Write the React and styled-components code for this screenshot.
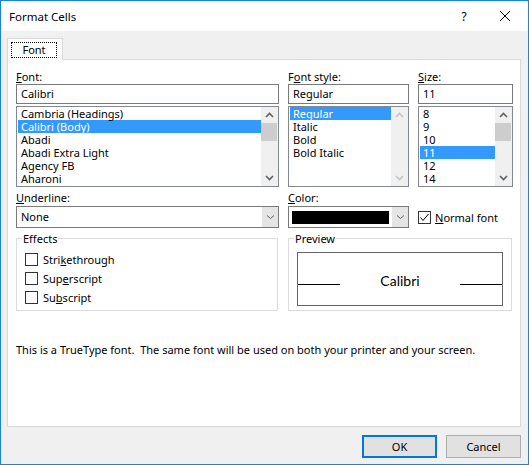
import React from "react";
import styled, { createGlobalStyle } from "styled-components";

const GlobalStyle = createGlobalStyle`
  html, body {
    margin: 0;
    padding: 0;
    background: #ffffff;
  }
  body {
    font-family: "Noto Sans", "Open Sans", sans-serif;
    font-size: 11px;
    color: #000000;
  }
  * {
    box-sizing: border-box;
  }
`;

const Window = styled.div`
  width: 529px;
  height: 465px;
  display: flex;
  flex-direction: column;
  border: 1px solid #1883d7;
  background: #f0f0f0;
`;

const TitleBar = styled.div`
  flex: none;
  height: 30px;
  display: flex;
  align-items: center;
  padding-left: 8px;
  background: #ffffff;
`;

const Title = styled.span`
  font-size: 11.5px;
  line-height: 15px;
`;

const TitleButton = styled.div`
  width: ${(props) => props.$width}px;
  height: 30px;
  display: flex;
  align-items: center;
  justify-content: center;
  font-size: 12px;
  &:first-of-type {
    margin-left: auto;
  }
`;

const Body = styled.div`
  flex: 1;
  display: flex;
  flex-direction: column;
  padding: 7px 7px 6px 6px;
`;

const TabStrip = styled.div`
  display: flex;
  height: 21px;
`;

const Tab = styled.div`
  position: relative;
  z-index: 1;
  width: 56px;
  height: 22px;
  padding: 3px 0 0 3px;
  background: #ffffff;
  border: 1px solid #d9d9d9;
  border-bottom: none;
`;

const TabFocus = styled.div`
  width: 46px;
  height: 16px;
  border: 1px dotted #000000;
  line-height: 14px;
  text-align: center;
`;

const Panel = styled.div`
  flex: 1;
  display: flex;
  flex-direction: column;
  padding: 9px 7px 0 8px;
  background: #ffffff;
  border: 1px solid #d9d9d9;
`;

const FieldGrid = styled.div`
  display: grid;
  grid-template-columns: 263px 121px 95px;
  column-gap: 9px;
  row-gap: 3px;
`;

const Field = styled.div`
  display: flex;
  flex-direction: column;
  gap: ${(props) => props.$gap || 0}px;
`;

const Label = styled.div`
  height: 15px;
  line-height: 15px;
  white-space: pre;
`;

const Key = styled.span`
  text-decoration: underline;
  text-underline-offset: 1px;
`;

const TextBox = styled.div`
  height: 20px;
  padding-left: 4px;
  line-height: 18px;
  border: 1px solid #7a7a7a;
  background: #ffffff;
`;

const ListBox = styled.div`
  height: 81px;
  margin-top: 2px;
  display: flex;
  border: 1px solid #828790;
  background: #ffffff;
`;

const ListItems = styled.div`
  flex: 1;
  padding-left: 1px;
  overflow: hidden;
`;

const ListItem = styled.div`
  height: 13px;
  padding-left: 3px;
  line-height: 13px;
  white-space: nowrap;
  background: ${(props) => (props.$selected ? "#3399ff" : "transparent")};
  color: ${(props) => (props.$selected ? "#ffffff" : "#000000")};
`;

const ScrollBar = styled.div`
  width: 17px;
  display: flex;
  flex-direction: column;
  background: #f0f0f0;
`;

const ArrowCell = styled.div`
  height: 16px;
  display: flex;
  align-items: center;
  justify-content: center;
`;

const Track = styled.div`
  flex: 1;
`;

const Thumb = styled.div`
  height: 18px;
  margin: ${(props) => props.$top}px 1px 0 0;
  background: #cdcdcd;
`;

const Combo = styled.div`
  height: 22px;
  display: flex;
  align-items: center;
  border: 1px solid #7a7a7a;
  background: #ffffff;
`;

const ComboText = styled.div`
  flex: 1;
  padding-left: 4px;
  line-height: 18px;
`;

const Swatch = styled.div`
  flex: 1;
  height: 13px;
  margin: 0 3px;
  background: #000000;
`;

const ComboButton = styled.div`
  width: 16px;
  align-self: stretch;
  display: flex;
  align-items: center;
  justify-content: center;
  background: #e5e5e5;
`;

const CheckRow = styled.label`
  height: ${(props) => props.$height || 13}px;
  display: flex;
  align-items: center;
  gap: ${(props) => props.$gap || 5}px;
  line-height: 13px;
  align-self: ${(props) => props.$align || "auto"};
`;

const Box = styled.span`
  width: 13px;
  height: 13px;
  flex: none;
  display: flex;
  align-items: center;
  justify-content: center;
  border: 1px solid #333333;
  background: #ffffff;
`;

const Group = styled.fieldset`
  grid-column: ${(props) => props.$column};
  min-width: 0;
  margin: 0 1px 0 0;
  padding: ${(props) => props.$padding};
  border: 1px solid #dcdcdc;
`;

const Legend = styled.legend`
  margin-left: -3px;
  padding: 0 1px;
  line-height: 15px;
`;

const CheckList = styled.div`
  display: flex;
  flex-direction: column;
  gap: 6px;
`;

const PreviewBox = styled.div`
  height: 54px;
  display: grid;
  grid-template-columns: 42px 1fr 42px;
  align-items: end;
  padding-bottom: 20px;
  border: 1px solid #646464;
`;

const PreviewRule = styled.div`
  height: 1px;
  background: #000000;
`;

const PreviewText = styled.div`
  margin-bottom: -4px;
  font-family: Lato, "Open Sans", sans-serif;
  font-size: 14px;
  line-height: 17px;
  text-align: center;
`;

const Message = styled.div`
  margin-top: 31px;
  line-height: 15px;
  white-space: pre;
`;

const Footer = styled.div`
  height: 23px;
  margin-top: 8px;
  display: flex;
  justify-content: flex-end;
  gap: 9px;
`;

const Button = styled.button`
  width: 75px;
  height: 23px;
  padding: 0;
  font-family: inherit;
  font-size: 11px;
  color: #000000;
  background: #e1e1e1;
  border: ${(props) => (props.$default ? "2px solid #0078d7" : "1px solid #adadad")};
`;

function Chevron({ up, disabled }) {
  return (
    <svg width="9" height="6" viewBox="0 0 9 6">
      <path
        d={up ? "M1 5 L4.5 1.5 L8 5" : "M1 1 L4.5 4.5 L8 1"}
        fill="none"
        stroke={disabled ? "#c4c4c4" : "#606060"}
        strokeWidth="1.6"
      />
    </svg>
  );
}

function ComboArrow() {
  return (
    <svg width="9" height="6" viewBox="0 0 9 6">
      <path d="M1 1.5 L4.5 4.5 L8 1.5" fill="none" stroke="#606060" strokeWidth="1" />
    </svg>
  );
}

function CheckMark() {
  return (
    <svg width="11" height="11" viewBox="0 0 11 11">
      <path d="M1.5 5.5 L4 8.5 L9.5 2" fill="none" stroke="#000000" strokeWidth="1" />
    </svg>
  );
}

function CloseIcon() {
  return (
    <svg width="10" height="10" viewBox="0 0 10 10">
      <path d="M0 0 L10 10 M10 0 L0 10" stroke="#000000" strokeWidth="1" />
    </svg>
  );
}

function List({ items, selected, thumb, disabled }) {
  return (
    <ListBox>
      <ListItems>
        {items.map((item) => (
          <ListItem key={item} $selected={item === selected}>
            {item}
          </ListItem>
        ))}
      </ListItems>
      <ScrollBar>
        <ArrowCell>
          <Chevron up disabled={disabled} />
        </ArrowCell>
        <Track>{thumb !== undefined && <Thumb $top={thumb} />}</Track>
        <ArrowCell>
          <Chevron disabled={disabled} />
        </ArrowCell>
      </ScrollBar>
    </ListBox>
  );
}

function CheckBox({ checked, children, ...rest }) {
  return (
    <CheckRow {...rest}>
      <Box>{checked && <CheckMark />}</Box>
      <span>{children}</span>
    </CheckRow>
  );
}

const fonts = [
  "Cambria (Headings)",
  "Calibri (Body)",
  "Abadi",
  "Abadi Extra Light",
  "Agency FB",
  "Aharoni",
];
const styles = ["Regular", "Italic", "Bold", "Bold Italic"];
const sizes = ["8", "9", "10", "11", "12", "14"];

export default function App() {
  return (
    <>
      <GlobalStyle />
      <Window>
        <TitleBar>
          <Title>Format Cells</Title>
          <TitleButton $width={36}>?</TitleButton>
          <TitleButton $width={46}>
            <CloseIcon />
          </TitleButton>
        </TitleBar>
        <Body>
          <TabStrip>
            <Tab>
              <TabFocus>Font</TabFocus>
            </Tab>
          </TabStrip>
          <Panel>
            <FieldGrid>
              <Field>
                <Label>
                  <Key>F</Key>ont:
                </Label>
                <TextBox>Calibri</TextBox>
                <List items={fonts} selected="Calibri (Body)" thumb={0} />
              </Field>
              <Field>
                <Label>
                  F<Key>o</Key>nt style:
                </Label>
                <TextBox>Regular</TextBox>
                <List items={styles} selected="Regular" disabled />
              </Field>
              <Field>
                <Label>
                  <Key>S</Key>ize:
                </Label>
                <TextBox>11</TextBox>
                <List items={sizes} selected="11" thumb={0} />
              </Field>

              <Field $gap={1}>
                <Label>
                  <Key>U</Key>nderline:
                </Label>
                <Combo>
                  <ComboText>None</ComboText>
                  <ComboButton>
                    <ComboArrow />
                  </ComboButton>
                </Combo>
              </Field>
              <Field $gap={1}>
                <Label>
                  <Key>C</Key>olor:
                </Label>
                <Combo>
                  <Swatch />
                  <ComboButton>
                    <ComboArrow />
                  </ComboButton>
                </Combo>
              </Field>
              <CheckBox checked $height={22} $gap={4} $align="end">
                <Key>N</Key>ormal font
              </CheckBox>

              <Group $column="1" $padding="7px 6px 6px 8px">
                <Legend>Effects</Legend>
                <CheckList>
                  <CheckBox>
                    Stri<Key>k</Key>ethrough
                  </CheckBox>
                  <CheckBox>
                    Sup<Key>e</Key>rscript
                  </CheckBox>
                  <CheckBox>
                    Su<Key>b</Key>script
                  </CheckBox>
                </CheckList>
              </Group>
              <Group $column="2 / 4" $padding="6px 8px 4px 8px">
                <Legend>Preview</Legend>
                <PreviewBox>
                  <PreviewRule />
                  <PreviewText>Calibri</PreviewText>
                  <PreviewRule />
                </PreviewBox>
              </Group>
            </FieldGrid>
            <Message>
              This is a TrueType font.  The same font will be used on both your printer and your screen.
            </Message>
          </Panel>
          <Footer>
            <Button $default>OK</Button>
            <Button>Cancel</Button>
          </Footer>
        </Body>
      </Window>
    </>
  );
}
